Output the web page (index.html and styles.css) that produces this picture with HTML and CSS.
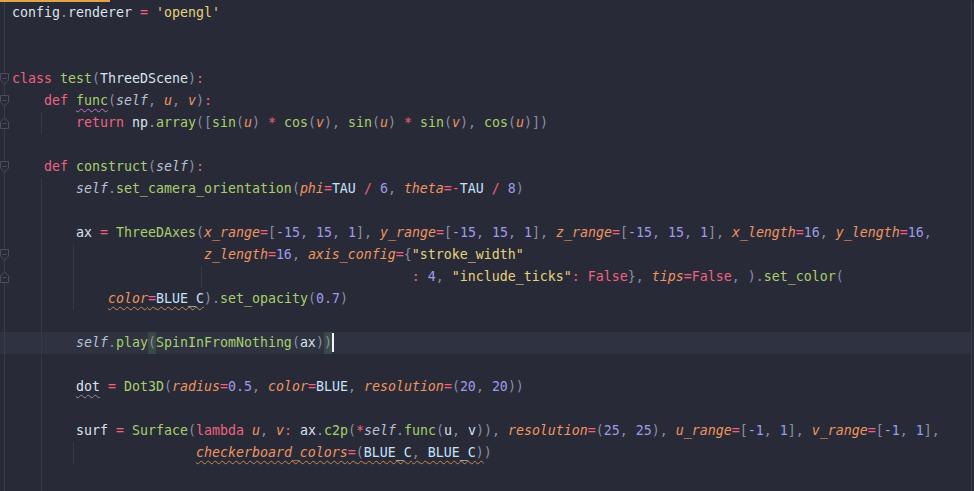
FILE: index.html
```html
<!DOCTYPE html>
<html>
<head>
<meta charset="utf-8">
<link rel="stylesheet" href="styles.css">
</head>
<body>
<div class="topbar"></div>
<div class="editor">
  <div class="line"><div class="gut"></div><div class="code">config<span class="b">.</span>renderer <span class="k">=</span> <span class="str">'opengl'</span></div></div>
  <div class="line"><div class="gut"></div><div class="code"></div></div>
  <div class="line"><div class="gut"></div><div class="code"></div></div>
  <div class="line"><div class="gut"><svg class="fold" width="9" height="12" viewBox="0 0 9 12"><path d="M0.5 0.5H8.5V7L4.5 11.3L0.5 7Z"/><path d="M2.5 5.5H6.5"/></svg></div><div class="code"><span class="k">class</span> <span class="f">test</span><span class="b">(</span>ThreeDScene<span class="b">)</span><span class="k">:</span></div></div>
  <div class="line"><div class="gut"><svg class="fold" width="9" height="12" viewBox="0 0 9 12"><path d="M0.5 0.5H8.5V7L4.5 11.3L0.5 7Z"/><path d="M2.5 5.5H6.5"/></svg></div><div class="code">    <span class="k">def</span> <span class="f wv-pink">func</span><span class="b">(</span><span class="s">self</span><span class="b">,</span> <span class="p">u</span><span class="b">,</span> <span class="p">v</span><span class="b">)</span><span class="k">:</span></div></div>
  <div class="line"><div class="gut"><svg class="fold" width="9" height="12" viewBox="0 0 9 12"><path d="M4.5 0.7L8.5 5V11.5H0.5V5Z"/><path d="M2.5 6.5H6.5"/></svg></div><div class="code g1">        <span class="k">return</span> np<span class="b">.</span><span class="f">array</span><span class="b">([</span><span class="f">sin</span><span class="b">(</span><span class="p">u</span><span class="b">)</span> <span class="k">*</span> <span class="f">cos</span><span class="b">(</span><span class="p">v</span><span class="b">),</span> <span class="f">sin</span><span class="b">(</span><span class="p">u</span><span class="b">)</span> <span class="k">*</span> <span class="f">sin</span><span class="b">(</span><span class="p">v</span><span class="b">),</span> <span class="f">cos</span><span class="b">(</span><span class="p">u</span><span class="b">)])</span></div></div>
  <div class="line"><div class="gut"></div><div class="code"></div></div>
  <div class="line"><div class="gut"><svg class="fold" width="9" height="12" viewBox="0 0 9 12"><path d="M0.5 0.5H8.5V7L4.5 11.3L0.5 7Z"/><path d="M2.5 5.5H6.5"/></svg></div><div class="code">    <span class="k">def</span> <span class="f">construct</span><span class="b">(</span><span class="s">self</span><span class="b">)</span><span class="k">:</span></div></div>
  <div class="line"><div class="gut"></div><div class="code g1">        <span class="s">self</span><span class="b">.</span><span class="f">set_camera_orientation</span><span class="b">(</span><span class="p">phi</span><span class="k">=</span><span class="c">TAU</span> <span class="k">/</span> <span class="n">6</span><span class="b">,</span> <span class="p">theta</span><span class="k">=-</span><span class="c">TAU</span> <span class="k">/</span> <span class="n">8</span><span class="b">)</span></div></div>
  <div class="line"><div class="gut"></div><div class="code g1"></div></div>
  <div class="line"><div class="gut"></div><div class="code g1">        ax <span class="k">=</span> <span class="f">ThreeDAxes</span><span class="b">(</span><span class="p">x_range</span><span class="k">=</span><span class="b">[</span><span class="n">-15</span><span class="b">,</span> <span class="n">15</span><span class="b">,</span> <span class="n">1</span><span class="b">],</span> <span class="p">y_range</span><span class="k">=</span><span class="b">[</span><span class="n">-15</span><span class="b">,</span> <span class="n">15</span><span class="b">,</span> <span class="n">1</span><span class="b">],</span> <span class="p">z_range</span><span class="k">=</span><span class="b">[</span><span class="n">-15</span><span class="b">,</span> <span class="n">15</span><span class="b">,</span> <span class="n">1</span><span class="b">],</span> <span class="p">x_length</span><span class="k">=</span><span class="n">16</span><span class="b">,</span> <span class="p">y_length</span><span class="k">=</span><span class="n">16</span><span class="b">,</span></div></div>
  <div class="line"><div class="gut"><svg class="fold" width="9" height="12" viewBox="0 0 9 12"><path d="M0.5 0.5H8.5V7L4.5 11.3L0.5 7Z"/><path d="M2.5 5.5H6.5"/></svg></div><div class="code g12">                        <span class="p">z_length</span><span class="k">=</span><span class="n">16</span><span class="b">,</span> <span class="p">axis_config</span><span class="k">=</span><span class="b">{</span><span class="str">"stroke_width"</span></div></div>
  <div class="line"><div class="gut"><svg class="fold" width="9" height="12" viewBox="0 0 9 12"><path d="M4.5 0.7L8.5 5V11.5H0.5V5Z"/><path d="M2.5 6.5H6.5"/></svg></div><div class="code g123">                                                  <span class="k">:</span> <span class="n">4</span><span class="b">,</span> <span class="str">"include_ticks"</span><span class="k">:</span> <span class="k">False</span><span class="b">},</span> <span class="p">tips</span><span class="k">=False</span><span class="b">, ).</span><span class="f">set_color</span><span class="b">(</span></div></div>
  <div class="line"><div class="gut"></div><div class="code g12">            <span class="wv-orange"><span class="p">color</span><span class="k">=</span><span class="c">BLUE_C</span></span><span class="b">).</span><span class="f">set_opacity</span><span class="b">(</span><span class="n">0.7</span><span class="b">)</span></div></div>
  <div class="line"><div class="gut"></div><div class="code g1"></div></div>
  <div class="line cur"><div class="gut"></div><div class="code g1">        <span class="s">self</span><span class="b">.</span><span class="f">play</span><span class="b match">(</span><span class="f">SpinInFromNothing</span><span class="b">(</span>ax<span class="b">)</span><span class="b match">)</span><span class="caret"></span></div></div>
  <div class="line"><div class="gut"></div><div class="code g1"></div></div>
  <div class="line"><div class="gut"></div><div class="code g1">        <span class="wv-gray">dot</span> <span class="k">=</span> <span class="f">Dot3D</span><span class="b">(</span><span class="p">radius</span><span class="k">=</span><span class="n">0.5</span><span class="b">,</span> <span class="p">color</span><span class="k">=</span><span class="c">BLUE</span><span class="b">,</span> <span class="p">resolution</span><span class="k">=</span><span class="b">(</span><span class="n">20</span><span class="b">,</span> <span class="n">20</span><span class="b">))</span></div></div>
  <div class="line"><div class="gut"></div><div class="code g1"></div></div>
  <div class="line"><div class="gut"></div><div class="code g1">        surf <span class="k">=</span> <span class="f">Surface</span><span class="b">(</span><span class="k">lambda</span> <span class="p">u</span><span class="b">,</span> <span class="p">v</span><span class="k">:</span> ax<span class="b">.</span><span class="f">c2p</span><span class="b">(</span><span class="k">*</span><span class="s">self</span><span class="b">.</span><span class="f">func</span><span class="b">(</span>u<span class="b">,</span> v<span class="b">)),</span> <span class="p">resolution</span><span class="k">=</span><span class="b">(</span><span class="n">25</span><span class="b">,</span> <span class="n">25</span><span class="b">),</span> <span class="p">u_range</span><span class="k">=</span><span class="b">[</span><span class="n">-1</span><span class="b">,</span> <span class="n">1</span><span class="b">],</span> <span class="p">v_range</span><span class="k">=</span><span class="b">[</span><span class="n">-1</span><span class="b">,</span> <span class="n">1</span><span class="b">],</span></div></div>
  <div class="line"><div class="gut"></div><div class="code g12">                       <span class="wv-orange"><span class="p">checkerboard_colors</span><span class="k">=</span><span class="b">(</span><span class="c">BLUE_C</span><span class="b">,</span> <span class="c">BLUE_C</span><span class="b">)</span></span><span class="b">)</span></div></div>
  <div class="line"><div class="gut"></div><div class="code g1"></div></div>
  <div class="line"><div class="gut"></div><div class="code g1"></div></div>
</div>
</body>
</html>
```

FILE: styles.css
```css
html, body {
  margin: 0;
  padding: 0;
  background: #282a37;
  overflow: hidden;
}

.topbar {
  width: 110px;
  height: 2px;
  background: #e3a446;
}

.editor {
  width: 971px;
  height: 489px;
  border-right: 1px solid #3a3d4b;
  font-family: "DejaVu Sans Mono", "Liberation Mono", monospace;
  font-size: 13.29px;
  color: #d9e3ef;
  overflow: hidden;
}

.line {
  display: flex;
  height: 22px;
}

.line.cur {
  background: #2f3241;
}

.gut {
  flex: none;
  width: 12px;
  height: 22px;
  display: flex;
  align-items: center;
  background: linear-gradient(to right, transparent 4px, #3a3d4b 4px, #3a3d4b 5px, transparent 5px);
}

.fold {
  display: block;
  fill: #282a37;
  stroke: #4a4e5d;
  stroke-width: 1;
}

.code {
  flex: 1;
  white-space: pre;
  line-height: 22px;
  height: 22px;
  background-repeat: no-repeat;
}

.g1 {
  background-image: linear-gradient(#353846, #353846);
  background-size: 1px 100%;
  background-position: 29px 0;
}

.g12 {
  background-image: linear-gradient(#353846, #353846), linear-gradient(#353846, #353846);
  background-size: 1px 100%, 1px 100%;
  background-position: 29px 0, 61px 0;
}

.g123 {
  background-image: linear-gradient(#353846, #353846), linear-gradient(#353846, #353846), linear-gradient(#353846, #353846);
  background-size: 1px 100%, 1px 100%, 1px 100%;
  background-position: 29px 0, 61px 0, 189px 0;
}

.k { color: #ee6381; }
.f { color: #a8cf6c; }
.p { color: #ef9560; font-style: italic; }
.s { color: #b7c0d2; font-style: italic; }
.n { color: #9c9cea; }
.str { color: #e6d27c; }
.b { color: #8a90a2; }
.c { color: #c6e2fb; }

.match {
  background: #3a4a48;
  display: inline-block;
  height: 22px;
}

.caret {
  display: inline-block;
  width: 2px;
  height: 19px;
  background: #f2f4f8;
  vertical-align: middle;
  margin-top: -2px;
}

.wv-pink {
  text-decoration: underline wavy #c07cc0;
  text-decoration-thickness: 1px;
  text-underline-offset: 3px;
}

.wv-orange {
  text-decoration: underline wavy #c48a55;
  text-decoration-thickness: 1px;
  text-underline-offset: 3px;
}

.wv-gray {
  text-decoration: underline wavy #8b909e;
  text-decoration-thickness: 1px;
  text-underline-offset: 3px;
}
```
